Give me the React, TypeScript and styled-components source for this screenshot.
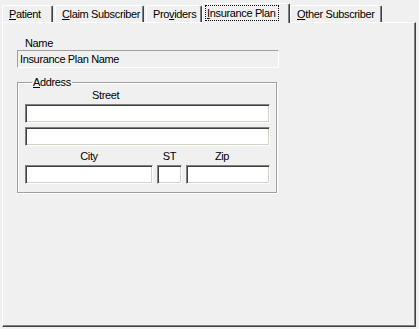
import React from "react";
import styled, { createGlobalStyle } from "styled-components";

const Global = createGlobalStyle({
	'html, body': {
		margin: 0,
		padding: 0,
		background: '#f0f0f0',
		fontFamily: '"Liberation Sans", Arial, sans-serif',
		fontSize: 11,
		letterSpacing: '-0.35px',
		color: '#000'
	}
});

const Window = styled.div({
	width: 419,
	height: 329,
	padding: '2px 3px 2px 2px',
	boxSizing: 'border-box',
	display: 'flex',
	flexDirection: 'column'
});

const TabStrip = styled.div({
	display: 'flex',
	alignItems: 'flex-end',
	height: 20
});

const Tab = styled.div<{ $w: number; $active?: boolean }>(({ $w, $active }) => ({
	width: $w,
	height: $active ? 20 : 17,
	boxSizing: 'border-box',
	borderTop: '1px solid #fff',
	borderLeft: '1px solid #fff',
	borderRight: '1px solid #404040',
	boxShadow: 'inset -1px 0 0 #808080',
	borderRadius: '2px 2px 0 0',
	background: '#f0f0f0',
	display: 'flex',
	alignItems: 'center',
	paddingLeft: $active ? 3 : 6,
	paddingBottom: $active ? 1 : 0,
	margin: $active ? '0 0 -1px -2px' : '0 2px 0 0',
	position: 'relative',
	zIndex: $active ? 2 : 1,
	whiteSpace: 'nowrap'
}));

const Focus = styled.span({
	outline: '1px dotted #000',
	padding: '1px 2px 0 1px',
	lineHeight: '13px'
});

const Panel = styled.div({
	width: 414,
	height: 305,
	boxSizing: 'border-box',
	borderTop: '1px solid #fff',
	borderLeft: '1px solid #fff',
	borderRight: '1px solid #404040',
	borderBottom: '1px solid #404040',
	boxShadow: 'inset -1px -1px 0 #808080',
	background: '#f0f0f0',
	padding: '14px 0 0 14px',
	display: 'flex',
	flexDirection: 'column'
});

const Label = styled.div<{ $indent?: number }>(({ $indent = 0 }) => ({
	paddingLeft: $indent,
	lineHeight: '13px',
	height: 13,
	whiteSpace: 'nowrap'
}));

const ReadOnly = styled.div({
	width: 262,
	height: 18,
	boxSizing: 'border-box',
	border: '1px solid #a0a0a0',
	borderRightColor: '#fff',
	borderBottomColor: '#fff',
	padding: '0 0 0 2px',
	lineHeight: '16px'
});

const Group = styled.fieldset({
	width: 260,
	height: 117,
	boxSizing: 'border-box',
	margin: '8px 0 0 0',
	padding: '0 0 0 7px',
	border: '1px solid #a0a0a0',
	boxShadow: 'inset 1px 1px 0 #fff, 1px 1px 0 #fff',
	borderRadius: 0,
	'& legend': {
		padding: '0 1px',
		marginLeft: 7,
		lineHeight: '13px'
	}
});

const Input = styled.div<{ $w: number }>(({ $w }) => ({
	width: $w,
	height: 19,
	boxSizing: 'border-box',
	background: '#fff',
	borderTop: '1px solid #808080',
	borderLeft: '1px solid #808080',
	borderRight: '1px solid #fff',
	borderBottom: '1px solid #fff',
	boxShadow: 'inset 1px 1px 0 #404040, inset -1px -1px 0 #d4d0c8'
}));

const Stack = styled.div({
	display: 'flex',
	flexDirection: 'column',
	gap: 4
});

const Row = styled.div({
	display: 'flex',
	gap: 4
});

const Col = styled.div<{ $w: number }>(({ $w }) => ({
	width: $w,
	display: 'flex',
	flexDirection: 'column',
	gap: 2
}));

const Centered = styled.div<{ $shift?: number }>(({ $shift = 0 }) => ({
	textAlign: 'center',
	lineHeight: '13px',
	height: 13,
	paddingRight: $shift
}));

const U = styled.span({
	textDecoration: 'underline'
});

export default function App() {
	return <Window>
		<Global />
		<TabStrip>
			<Tab $w={51}><U>P</U>atient</Tab>
			<Tab $w={89}><U>C</U>laim Subscriber</Tab>
			<Tab $w={56}>Pro<U>v</U>iders</Tab>
			<Tab $w={88} $active><Focus><U>I</U>nsurance Plan</Focus></Tab>
			<Tab $w={92}><U>O</U>ther Subscriber</Tab>
		</TabStrip>
		<Panel>
			<Label $indent={8}>Name</Label>
			<ReadOnly>Insurance Plan Name</ReadOnly>
			<Group>
				<legend><U>A</U>ddress</legend>
				<Stack>
					<Col $w={245}>
						<Label $indent={67}>Street</Label>
						<Input $w={245} />
					</Col>
					<Input $w={245} />
					<Row>
						<Col $w={128}>
							<Centered>City</Centered>
							<Input $w={128} />
						</Col>
						<Col $w={25}>
							<Centered>ST</Centered>
							<Input $w={25} />
						</Col>
						<Col $w={84}>
							<Centered $shift={12}>Zip</Centered>
							<Input $w={84} />
						</Col>
					</Row>
				</Stack>
			</Group>
		</Panel>
	</Window>
}
